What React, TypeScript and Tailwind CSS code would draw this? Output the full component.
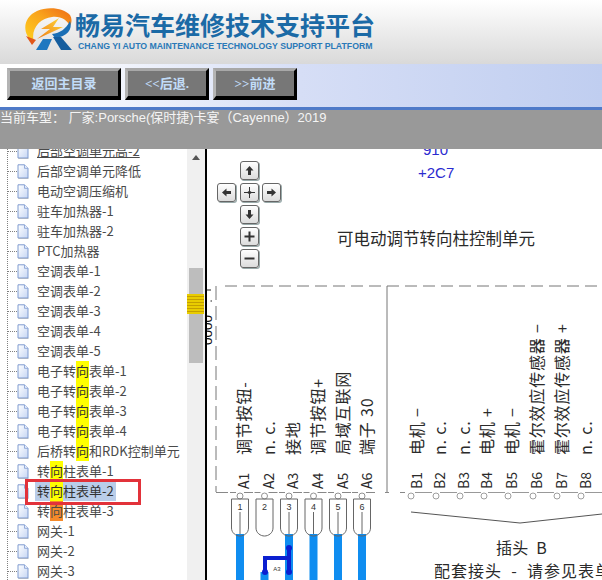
import type { ReactNode } from "react";

const treeItems = [
  "后部空调单元高-2",
  "后部空调单元降低",
  "电动空调压缩机",
  "驻车加热器-1",
  "驻车加热器-2",
  "PTC加热器",
  "空调表单-1",
  "空调表单-2",
  "空调表单-3",
  "空调表单-4",
  "空调表单-5",
  "电子转向表单-1",
  "电子转向表单-2",
  "电子转向表单-3",
  "电子转向表单-4",
  "后桥转向和RDK控制单元",
  "转向柱表单-1",
  "转向柱表单-2",
  "转向柱表单-3",
  "网关-1",
  "网关-2",
  "网关-3",
];

const cjk = "'Noto Sans CJK SC', 'Liberation Sans', sans-serif";

function DocIcon() {
  return (
    <svg width="12" height="15" viewBox="0 0 12 15" className="shrink-0">
      <defs>
        <linearGradient id="doc" x1="0" y1="0" x2="1" y2="1">
          <stop offset="0" stopColor="#ffffff" />
          <stop offset="1" stopColor="#c6d6f4" />
        </linearGradient>
      </defs>
      <path d="M1 .8H7.5L11 4.3V14H1Z" fill="url(#doc)" stroke="#7f9bd0" strokeWidth="1" />
      <path d="M7.5 .8V4.3H11" fill="#e8eefb" stroke="#7f9bd0" strokeWidth=".8" />
      <path d="M1.5 14.5H11.5" stroke="#a9b4c8" strokeWidth="1" />
    </svg>
  );
}

function TreeRow({ label, first }: { label: string; first: boolean }) {
  const i = label.indexOf("向");
  const selected = label === "转向柱表单-2";
  const orange = label === "转向柱表单-3";
  return (
    <div className="flex h-5 items-center">
      <div className="w-2 shrink-0" />
      <div className="h-0 w-[9px] shrink-0 border-t border-dotted border-[#808080]" />
      <DocIcon />
      <div
        className={`ml-[6px] flex h-5 items-center whitespace-nowrap px-[2px] text-[13px] leading-5 ${
          selected ? "bg-[#b9cde9] text-[#333]" : "text-[#4a4a4a]"
        } ${first ? "underline" : ""}`}
      >
        {i < 0 ? (
          label
        ) : (
          <>
            {label.slice(0, i)}
            <span className={`inline-block h-5 ${orange ? "bg-[#f58a2a]" : "bg-[#ffff00] text-[#333]"}`}>向</span>
            {label.slice(i + 1)}
          </>
        )}
      </div>
    </div>
  );
}

function NavButton({ children, width }: { children: ReactNode; width: string }) {
  return (
    <button
      className={`${width} h-[32px] border-[3px] border-b-4 border-t-[#a8a8a8] border-l-[#b4b4b4] border-r-black border-b-black bg-[#777] text-[13px] font-bold text-[#c2dcf8]`}
      style={{ fontFamily: "'Liberation Serif', 'Noto Sans CJK SC', serif" }}
    >
      {children}
    </button>
  );
}

function ZoomButton({ d }: { d: string }) {
  return (
    <div className="flex h-[19px] w-[19px] items-center justify-center rounded-[3px] border border-[#666] bg-gradient-to-b from-white to-[#dcdcdc] shadow-[1px_1px_0_#9aa]">
      <svg width="13" height="13" viewBox="0 0 13 13">
        <path d={d} fill="#333" />
      </svg>
    </div>
  );
}

// rotated label, reads bottom to top
function V({ x, y = 455, size = 16, spacing = 0.8, children }: { x: number; y?: number; size?: number; spacing?: number; children: ReactNode }) {
  return (
    <text
      x={x + size * 0.36}
      y={y}
      fontSize={size}
      fill="#2a2a2a"
      letterSpacing={spacing}
      transform={`rotate(-90 ${x + size * 0.36} ${y})`}
      style={{ fontFamily: cjk, whiteSpace: "pre" }}
    >
      {children}
    </text>
  );
}

const aPins = [240, 264.5, 289, 313.5, 338, 362];
const aLabels = [244, 269, 293, 318, 343, 367];
const bCircles = [411, 436, 460, 484, 508, 533, 557, 581];
const bLabels = [417, 440, 464, 487, 512, 537, 562, 586];

function Diagram() {
  return (
    <svg viewBox="207 149 395 431" className="block h-[431px] w-[395px]">
      <text x="423" y="155" fontSize="15" fill="#2b2bd0" style={{ fontFamily: "'Liberation Sans', sans-serif" }}>
        910
      </text>
      <text x="418" y="178" fontSize="15" fill="#2b2bd0" style={{ fontFamily: "'Liberation Sans', sans-serif" }}>
        +2C7
      </text>
      <text x="337" y="245" fontSize="16.5" fill="#2a2a2a" style={{ fontFamily: cjk }}>
        可电动调节转向柱控制单元
      </text>

      {/* dashed housing */}
      <path d="M225 286H602" stroke="#777" strokeWidth="1" strokeDasharray="12 6" fill="none" />
      <path d="M216 286V492" stroke="#777" strokeWidth="1" strokeDasharray="14 6" fill="none" />
      <path d="M387 286V493" stroke="#777" strokeWidth="1" fill="none" />
      <path d="M216 492.5H228M385 492.5H389M400 492.5H405" stroke="#888" strokeWidth="1" fill="none" />
      {aPins.map((x) => (
        <g key={x}>
          <path d={`M${x - 10} 492.5H${x - 4}M${x + 4} 492.5H${x + 13}`} stroke="#888" strokeWidth="1" />
          <circle cx={x} cy="496" r="3" fill="#fff" stroke="#777" strokeWidth=".8" />
        </g>
      ))}
      {bCircles.map((x) => (
        <g key={x}>
          <path d={`M${x + 4} 492.5H${x + 21}`} stroke="#999" strokeWidth="1" />
          <circle cx={x} cy="496" r="3" fill="#fff" stroke="#888" strokeWidth=".8" />
        </g>
      ))}

      {/* A labels */}
      {aLabels.map((x, i) => (
        <V key={x} x={x} y={489} size={14} spacing={0}>{`A${i + 1}`}</V>
      ))}
      <V x={244}>调节按钮-</V>
      <V x={269}>n. c.</V>
      <V x={293}>接地</V>
      <V x={318}>调节按钮+</V>
      <V x={343}>局域互联网</V>
      <V x={367}>端子 30</V>

      {/* B labels */}
      {bLabels.map((x, i) => (
        <V key={x} x={x} y={489} size={14} spacing={0}>{`B${i + 1}`}</V>
      ))}
      <V x={417}>电机 −</V>
      <V x={440}>n. c.</V>
      <V x={464}>n. c.</V>
      <V x={487}>电机 +</V>
      <V x={512}>电机 −</V>
      <V x={537}>霍尔效应传感器 −</V>
      <V x={562}>霍尔效应传感器 +</V>
      <V x={586}>n. c.</V>

      {/* wires */}
      {[240, 289, 313.5, 338, 362, 264.5].map((x) => (
        <rect key={x} x={x - 4} y={x === 264.5 ? 572 : 534} width="8" height="50" fill="#0f8df0" />
      ))}

      {/* pins */}
      {aPins.map((x, i) => (
        <g key={x}>
          <path
            d={`M${x - 8.5} 499H${x + 8.5}V528C${x + 8.5} 533 ${x + 4} 536 ${x} 536C${x - 4} 536 ${x - 8.5} 533 ${x - 8.5} 528Z`}
            fill="none"
            stroke="#666"
            strokeWidth="1"
          />
          <text x={x} y="510" fontSize="9" textAnchor="middle" fill="#333" style={{ fontFamily: "'Liberation Sans', sans-serif" }}>
            {i + 1}
          </text>
          {i !== 1 && <path d={`M${x} 512V534`} stroke="#666" strokeWidth="1" />}
        </g>
      ))}

      {/* splice */}
      <path d="M289 548V572M289 558H265V572" stroke="#0b1fd0" strokeWidth="4" fill="none" />
      <circle cx="289" cy="548" r="3" fill="#0b1fd0" />
      <circle cx="289" cy="572" r="3" fill="#0b1fd0" />
      <circle cx="265" cy="572" r="3" fill="#0b1fd0" />
      <text x="277" y="571" fontSize="6" textAnchor="middle" fill="#333" style={{ fontFamily: "'Liberation Sans', sans-serif" }}>
        A3
      </text>

      {/* plug B bracket */}
      <path d="M411 512L520 523L602 514" stroke="#555" strokeWidth="1" fill="none" />
      <text x="496" y="554" fontSize="16" letterSpacing=".3" fill="#2a2a2a" style={{ fontFamily: cjk, whiteSpace: "pre" }}>
        插头  B
      </text>
      <text x="434" y="577" fontSize="16" letterSpacing="1" fill="#2a2a2a" style={{ fontFamily: cjk, whiteSpace: "pre" }}>
        配套接头  -  请参见表单
      </text>

      {/* text clipped by the frame edge */}
      <path d="M207 290H211M210.5 301H212" stroke="#222" strokeWidth="1.2" />
      <text
        x="212"
        y="345"
        fontSize="13.5"
        fill="#111"
        transform="rotate(-90 212 345)"
        style={{ fontFamily: "'Liberation Sans', sans-serif" }}
      >
        0000
      </text>
    </svg>
  );
}

function Logo() {
  return (
    <svg width="50" height="44" viewBox="22 8 50 44" className="shrink-0">
      <defs>
        <linearGradient id="ring" x1="0" y1="1" x2="1" y2="0">
          <stop offset="0" stopColor="#ffd21e" />
          <stop offset=".55" stopColor="#f9a51c" />
          <stop offset="1" stopColor="#ee6a14" />
        </linearGradient>
        <linearGradient id="bolt" x1="1" y1="0" x2="0" y2="1">
          <stop offset="0" stopColor="#ffd83a" />
          <stop offset="1" stopColor="#ee7a16" />
        </linearGradient>
      </defs>
      <path d="M33 43C20 34 22 17 36 11C47 6 63 8 69 15C71 19 71 22 69 26C66 20 60 16 51 17C39 18 29 29 33 43Z" fill="url(#ring)" />
      <path d="M25 36L35 40L31 45Z" fill="#e2581a" />
      <path d="M58 18L40 29H49L36 39L62 27H52Z" fill="url(#bolt)" />
      <path d="M69 21C72 29 66 37 54 38L51 34C59 33 65 29 69 21Z" fill="#1b6fb5" />
      <path d="M42 39H51L46 50H35Z" fill="#1f78c0" />
      <path d="M52 37H60L71 50H60Z" fill="#155d9e" />
    </svg>
  );
}

export default function App() {
  return (
    <div className="flex h-[580px] w-[602px] flex-col overflow-hidden bg-white" style={{ fontFamily: cjk }}>
      {/* banner */}
      <header className="flex h-[64px] shrink-0 bg-gradient-to-b from-white to-[#d9d9d9] pl-[23px] pt-[8px]">
        <Logo />
        <div className="ml-[2px] pt-[3px]">
          <div className="text-[25px] font-bold leading-[26px] text-[#1b6aa6]">畅易汽车维修技术支持平台</div>
          <div
            className="mt-[3px] ml-[3px] whitespace-nowrap text-[8.72px] font-bold leading-3 text-[#2a79b8]"
            style={{ fontFamily: "'Liberation Sans', sans-serif" }}
          >
            CHANG YI AUTO MAINTENANCE TECHNOLOGY SUPPORT PLATFORM
          </div>
        </div>
      </header>

      {/* toolbar */}
      <nav className="flex h-[46px] shrink-0 gap-[4px] border-b-[3px] border-[#4f7ac8] bg-gradient-to-r from-white from-[5%] via-[#d6def6] via-[50%] to-[#c0cef0] pl-[7px] pt-[4px]">
        <NavButton width="w-[114px]">返回主目录</NavButton>
        <NavButton width="w-[84px]">&lt;&lt;后退.</NavButton>
        <NavButton width="w-[84px]">&gt;&gt;前进</NavButton>
      </nav>

      {/* current model bar */}
      <div
        className="h-[39px] shrink-0 bg-[#999] text-[13px] leading-[15px] text-[#f4f4f4]"
        style={{ fontFamily: "'Liberation Sans', 'Noto Sans CJK SC', sans-serif" }}
      >
        当前车型： 厂家:Porsche(保时捷)卡宴（Cayenne）2019
      </div>

      <main className="flex min-h-0 flex-1">
        {/* tree */}
        <div className="relative w-[187px] shrink-0 overflow-hidden">
          <div className="absolute bottom-0 left-[7px] top-0 border-l border-dotted border-[#808080]" />
          <div className="relative -mt-[8px]">
            {treeItems.map((t, n) => (
              <TreeRow key={t} label={t} first={n === 0} />
            ))}
          </div>
          <div className="absolute left-[25px] top-[330px] h-[26px] w-[116px] border-[3px] border-[#e2323a]" />
        </div>

        {/* scrollbar */}
        <div className="relative w-[18px] shrink-0 bg-[#f0f0f0]">
          <div className="absolute left-[5px] top-[6px] h-0 w-0 border-x-4 border-b-[5px] border-x-transparent border-b-[#555]" />
          <div className="absolute left-[2px] top-[119px] h-[95px] w-[14px] bg-[#bdbdbd]" />
          <div className="absolute left-0 top-[145px] h-[20px] w-[17px] bg-[repeating-linear-gradient(180deg,#e9cc00_0,#e9cc00_2px,#c49f00_2px,#c49f00_3px)]" />
        </div>

        {/* splitter */}
        <div className="w-[2px] shrink-0 bg-black" />

        {/* diagram */}
        <div className="relative flex-1 overflow-hidden">
          <Diagram />
          <div className="absolute left-[10px] top-[12px] grid grid-cols-[19px_19px_19px] gap-x-[3.5px] gap-y-[3px]">
            <div />
            <ZoomButton d="M6.5 2L10.5 6.5H8V11H5V6.5H2.5Z" />
            <div />
            <ZoomButton d="M2 6.5L6.5 2.5V5H11V8H6.5V10.5Z" />
            <ZoomButton d="M6 1H7V5L8.5 6H12V7H8.5L7 8V12H6V8L4.5 7H1V6H4.5L6 5Z" />
            <ZoomButton d="M11 6.5L6.5 2.5V5H2V8H6.5V10.5Z" />
            <div />
            <ZoomButton d="M6.5 11L10.5 6.5H8V2H5V6.5H2.5Z" />
            <div />
            <div />
            <ZoomButton d="M5.5 1.5H7.5V5.5H11.5V7.5H7.5V11.5H5.5V7.5H1.5V5.5H5.5Z" />
            <div />
            <div />
            <ZoomButton d="M1.5 5.5H11.5V7.5H1.5Z" />
            <div />
          </div>
        </div>
      </main>
    </div>
  );
}
